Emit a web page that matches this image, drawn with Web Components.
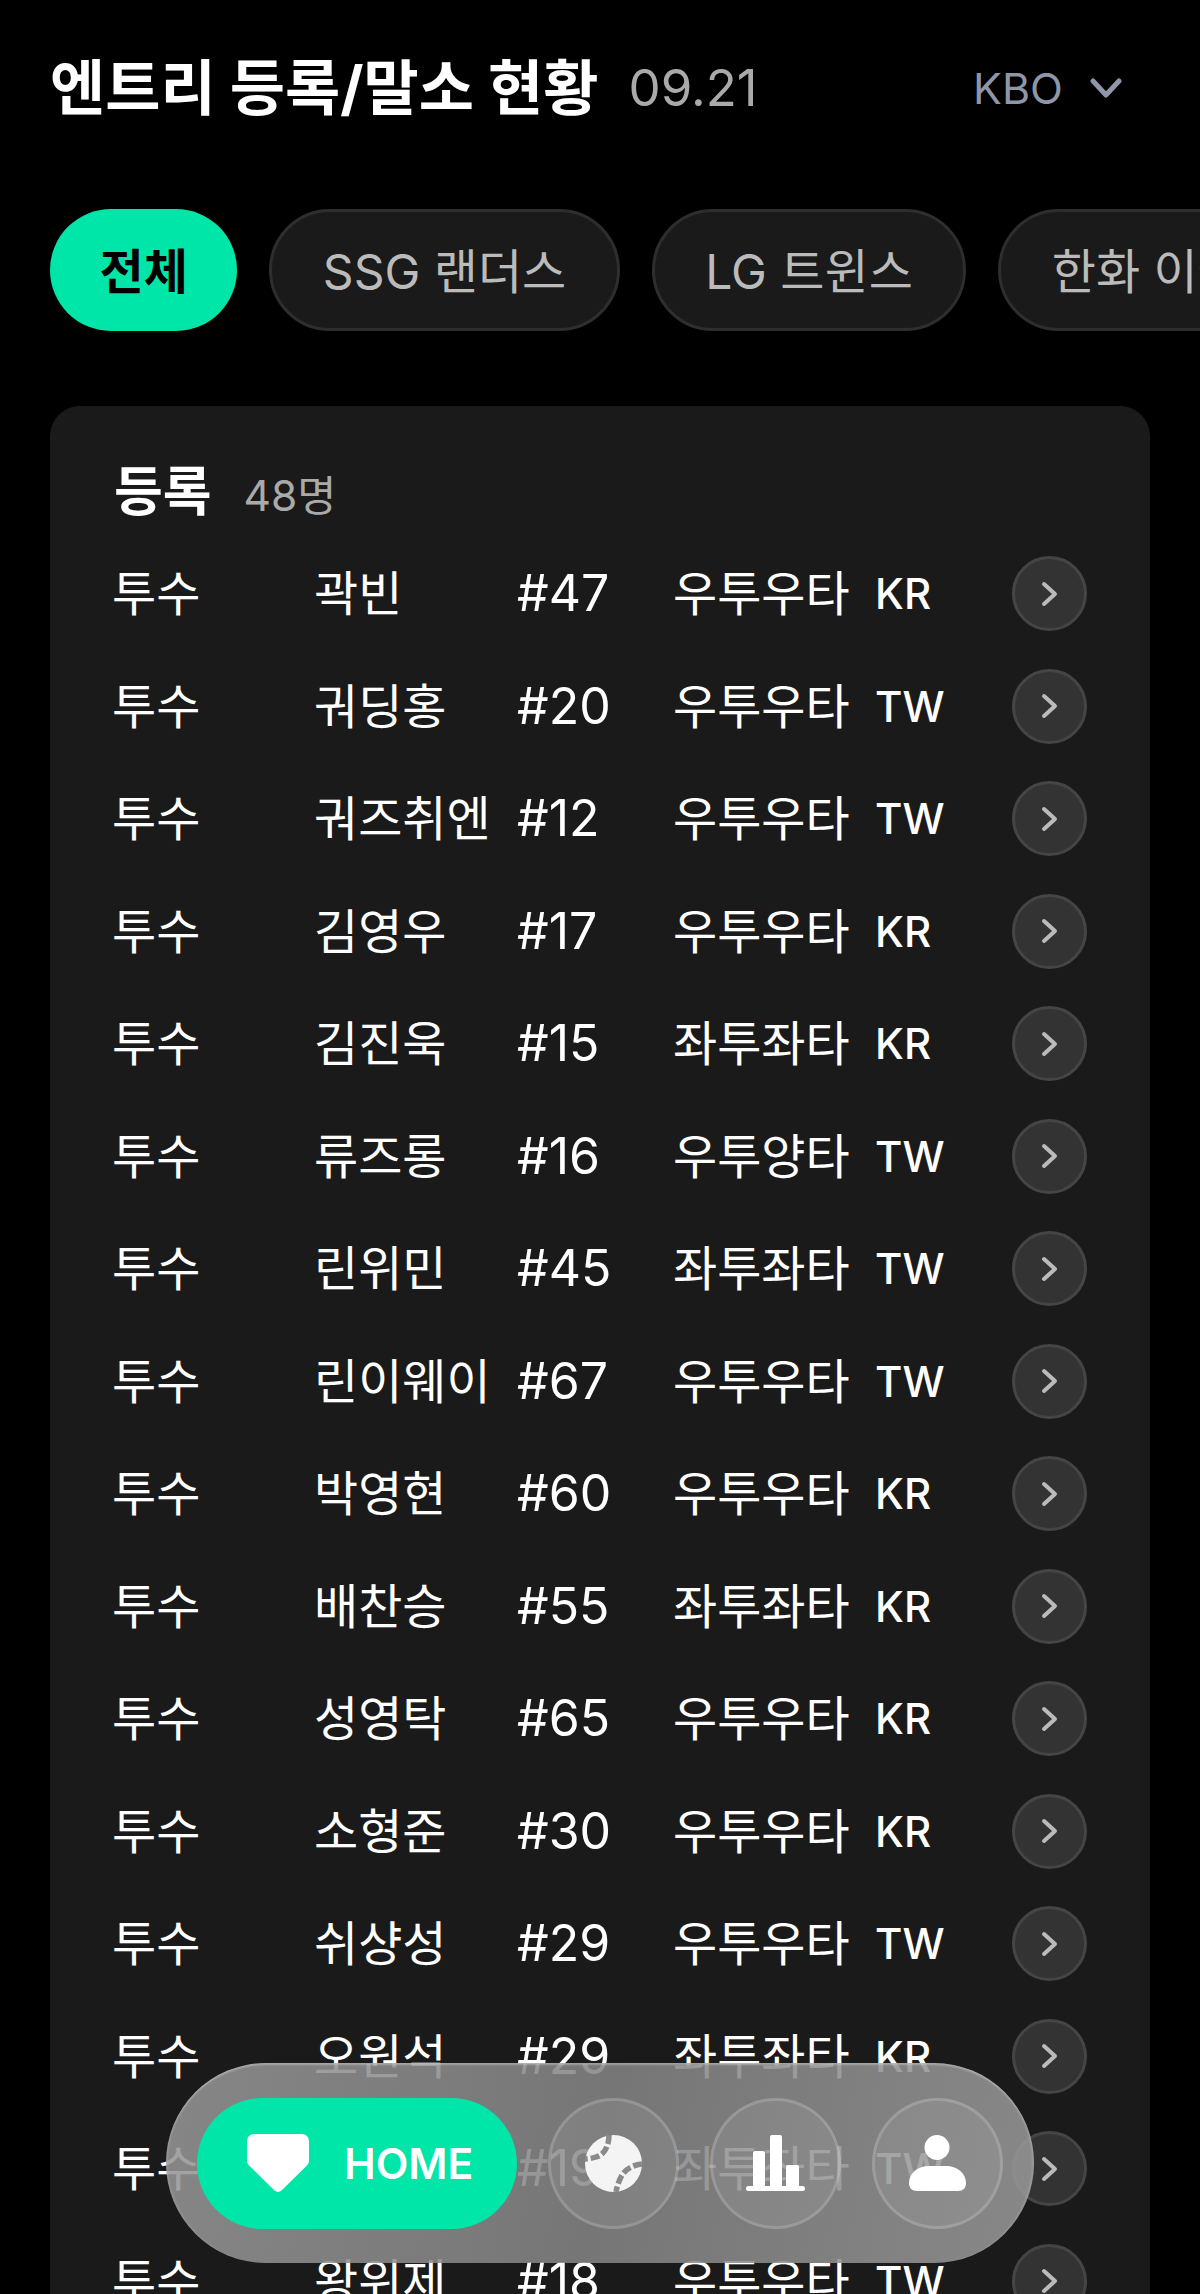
<!DOCTYPE html>
<html lang="ko">
<head>
<meta charset="utf-8">
<title>엔트리 등록/말소 현황</title>
<style>
html,body{margin:0;padding:0;background:#000;height:2294px;overflow:hidden}
body{font-family:Inter,"Noto Sans CJK KR",sans-serif;color:#fff;position:relative}
</style>
</head>
<body>
<entry-page></entry-page>
<script>
const FONT='Inter,"Noto Sans CJK KR",sans-serif';
class EntryHeader extends HTMLElement{
  constructor(){super();this.attachShadow({mode:'open'}).innerHTML=`<style>
  :host{display:flex;align-items:center;height:90px;padding:43px 50px 0;font-family:${FONT}}
  h1{margin:0;font-size:60px;font-weight:700;letter-spacing:0;line-height:90px;color:#fff;white-space:nowrap}
  .date{margin-left:30px;font-size:51px;font-weight:400;color:#aaa;line-height:90px}
  .league{margin-left:auto;margin-right:28px;display:flex;align-items:center;gap:27px;color:#8e96a8;font-size:43px;line-height:90px}
  svg{display:block}
  </style><h1>엔트리 등록/말소 현황</h1><span class="date">09.21</span>
  <span class="league">KBO<svg width="32" height="22" viewBox="0 0 32 22"><path d="M3 4l13 14L29 4" fill="none" stroke="#8e96a8" stroke-width="5" stroke-linecap="round" stroke-linejoin="round"/></svg></span>`;}
}
class FilterPill extends HTMLElement{
  constructor(){super();this.attachShadow({mode:'open'}).innerHTML=`<style>
  :host{display:flex;flex:none;align-items:center;box-sizing:border-box;height:122px;padding:0 50.500px 4px;border-radius:61px;background:#1a1a1a;border:3px solid #2e2e2e;color:#bbb;font-size:48px;font-weight:400;white-space:nowrap;font-family:${FONT}}
  :host([active]){background:#00e6a8;border:0;padding:0 49.500px 4px;color:#000;font-weight:600}
  </style><slot></slot>`;}
}
class FilterBar extends HTMLElement{
  constructor(){super();this.attachShadow({mode:'open'}).innerHTML=`<style>
  :host{display:flex;gap:32px;padding:76px 0 0 50px;overflow:hidden}
  </style><slot></slot>`;}
}
class EntryRow extends HTMLElement{
  constructor(){super();this.attachShadow({mode:'open'}).innerHTML=`<style>
  :host{display:grid;grid-template-columns:201px 202px 156px 202px 1fr 75px;align-items:center;height:75px;font-size:48px;line-height:75px;color:#fff;white-space:nowrap;font-family:${FONT}}
  .p{margin-left:-2px}
  .m{margin-left:-1px}
  .b{font-size:50px}
  .c{font-size:42px;font-weight:500}
  button{box-sizing:border-box;width:75px;height:75px;padding:0;border-radius:50%;background:#333;border:3px solid #454545;display:flex;align-items:center;justify-content:center}
  svg{display:block}
  </style><span class="p"></span><span class="m"></span><span class="b"></span><span></span><span class="c"></span>
  <button aria-label="상세"><svg width="18" height="26" viewBox="0 0 18 26"><path d="M3 3l11 10L3 23" fill="none" stroke="#bbb" stroke-width="4" stroke-linecap="round" stroke-linejoin="round"/></svg></button>`;}
  connectedCallback(){
    const s=this.shadowRoot.querySelectorAll('span');
    ['pos','name','num','hand','nat'].forEach((a,i)=>s[i].textContent=this.getAttribute(a));
  }
}
class EntryCard extends HTMLElement{
  constructor(){super();this.attachShadow({mode:'open'}).innerHTML=`<style>
  :host{display:block;margin:75px 50px 0;padding:50px 63px 0 64px;background:#1a1a1a;border-radius:30px 30px 0 0;font-family:${FONT}}
  header{display:flex;align-items:baseline;gap:32px;height:72px;line-height:72px;margin-bottom:28px}
  h2{margin:0;font-size:53px;font-weight:700;color:#fff}
  span{font-size:42.500px;color:#aaa}
  .list{display:flex;flex-direction:column;gap:37.500px}
  </style><header><h2>등록</h2><span>48명</span></header><div class="list"><slot></slot></div>`;}
}
class NavItem extends HTMLElement{
  constructor(){super();this.attachShadow({mode:'open'}).innerHTML=`<style>
  :host{display:flex;flex:none;align-items:center;justify-content:center;box-sizing:border-box;width:131px;height:131px;border-radius:50%;background:rgba(255,255,255,.07);border:3px solid rgba(255,255,255,.16)}
  :host([active]){width:320px;border:0;border-radius:66px;background:#00e6a8;justify-content:flex-start;padding-left:50px;gap:35px;color:#fff;font:600 42.500px ${FONT}}
  </style><slot></slot>`;}
}
class BottomNav extends HTMLElement{
  constructor(){super();this.attachShadow({mode:'open'}).innerHTML=`<style>
  :host{position:absolute;left:166px;top:2063px;box-sizing:border-box;width:868px;height:200px;display:flex;align-items:center;gap:31px;padding:0 31px;border-radius:100px;background:linear-gradient(100deg,rgba(150,150,150,.87),rgba(132,132,132,.87) 50%,rgba(152,152,152,.87));box-shadow:inset 0 3px 2px -1px rgba(255,255,255,.3),inset 3px 0 2px -1px rgba(255,255,255,.12),inset -3px 0 2px -1px rgba(255,255,255,.14)}
  </style><slot></slot>`;}
}
class EntryPage extends HTMLElement{
  constructor(){super();
    const rows=[['곽빈','#47','우투우타','KR'],['궈딩홍','#20','우투우타','TW'],['궈즈취엔','#12','우투우타','TW'],['김영우','#17','우투우타','KR'],['김진욱','#15','좌투좌타','KR'],['류즈롱','#16','우투양타','TW'],['린위민','#45','좌투좌타','TW'],['린이웨이','#67','우투우타','TW'],['박영현','#60','우투우타','KR'],['배찬승','#55','좌투좌타','KR'],['성영탁','#65','우투우타','KR'],['소형준','#30','우투우타','KR'],['쉬샹성','#29','우투우타','TW'],['오원석','#29','좌투좌타','KR'],['왕옌청','#19','좌투좌타','TW'],['왕위제','#18','우투우타','TW']];
    const r=rows.map(x=>`<entry-row pos="투수" name="${x[0]}" num="${x[1]}" hand="${x[2]}" nat="${x[3]}"></entry-row>`).join('');
    this.attachShadow({mode:'open'}).innerHTML=`<style>:host{display:block;height:2294px;overflow:hidden}svg{display:block}</style>
    <entry-header></entry-header>
    <filter-bar><filter-pill active>전체</filter-pill><filter-pill>SSG 랜더스</filter-pill><filter-pill>LG 트윈스</filter-pill><filter-pill>한화 이글스</filter-pill></filter-bar>
    <entry-card>${r}</entry-card>
    <bottom-nav>
      <nav-item active><svg width="62" height="58" viewBox="0 0 62 58"><path d="M7 0h48a7 7 0 0 1 7 7v20a6 6 0 0 1-1.800 4.200L34.500 56.500a5 5 0 0 1-7 0L1.800 31.200A6 6 0 0 1 0 27V7a7 7 0 0 1 7-7z" fill="#fff"/></svg><span>HOME</span></nav-item>
      <nav-item><svg width="57" height="57" viewBox="0 0 57 57"><circle cx="28.500" cy="28.500" r="28.500" fill="#f4f4f4"/><path d="M24 0C24 10 20 20 11 22 8 23 4 24 0 24" fill="none" stroke="#8a8a8a" stroke-width="5.500" stroke-dasharray="9 3"/><path d="M57 29C48 30 40 34 36 42 34 46 32 51 31 57" fill="none" stroke="#8a8a8a" stroke-width="5.500" stroke-dasharray="9 3"/></svg></nav-item>
      <nav-item><svg width="59" height="56" viewBox="0 0 59 56"><g fill="#fff"><rect x="7" y="16" width="12" height="38" rx="2"/><rect x="24" y="0" width="12" height="54" rx="2"/><rect x="40" y="30" width="13" height="24" rx="2"/><rect x="0" y="51" width="59" height="5" rx="2.500"/></g></svg></nav-item>
      <nav-item><svg width="57" height="56" viewBox="0 0 57 56"><g fill="#fff"><circle cx="28" cy="12.500" r="12.500"/><path d="M20 31h17c11 0 20 7 20 17 0 5-3 8-8 8H8c-5 0-8-3-8-8 0-10 9-17 20-17z"/></g></svg></nav-item>
    </bottom-nav>`;
  }
}
[['entry-header',EntryHeader],['filter-pill',FilterPill],['filter-bar',FilterBar],['entry-row',EntryRow],['entry-card',EntryCard],['nav-item',NavItem],['bottom-nav',BottomNav],['entry-page',EntryPage]].forEach(([n,c])=>customElements.define(n,c));
</script>
</body>
</html>
